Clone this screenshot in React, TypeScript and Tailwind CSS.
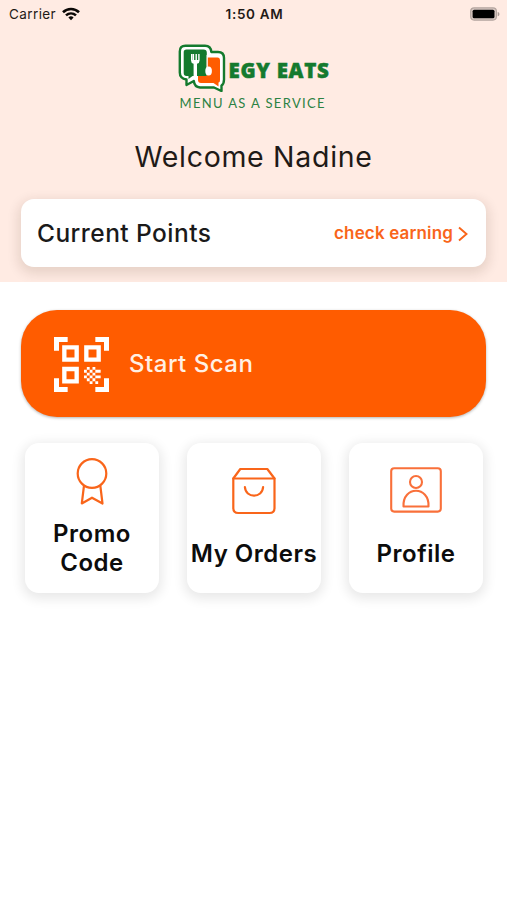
const font = "font-['Inter','Liberation_Sans',sans-serif]";

const StatusBar = () => {
    return (
        <div className="flex h-7 items-center justify-between pl-[9px] pr-[7px] text-[13.5px] text-[#1f1a17]">
            <div className="flex w-40 items-center gap-[6px]">
                <span className="tracking-[0.4px]">Carrier</span>
                <svg className="mb-px h-[14px] w-[18px]" viewBox="0 0 18 14" fill="none" stroke="#0b0806" strokeWidth="2.6">
                    <path d="M1 5.2C5.5 .9 12.5 .9 17 5.2" />
                    <path d="M4 8.4C6.9 5.8 11.1 5.8 14 8.4" />
                    <path d="M6.4 10.4C8 9 10 9 11.6 10.4L9 13.2Z" fill="#0b0806" stroke="none" />
                </svg>
            </div>
            <span className="font-semibold tracking-[0.7px]">1:50 AM</span>
            <div className="flex w-40 items-center justify-end">
                <svg className="mb-px h-[14px] w-[30px]" viewBox="0 0 31 14">
                    <rect x=".7" y=".7" width="26.6" height="12.6" rx="3.6" fill="#d9c9c3" stroke="#b3a49e" strokeWidth="1.2" />
                    <rect x="2.7" y="2.6" width="22.6" height="8.8" rx="1.6" fill="#000" />
                    <path d="M28.6 5V9.4C31 8.8 31 5.6 28.6 5Z" fill="#a99b95" />
                </svg>
            </div>
        </div>
    )
}

const Logo = () => {
    return (
        <div className="mx-auto flex w-[152px] flex-col">
            <div className="flex h-[48px] items-center">
                <svg className="h-[48px] w-[48px] shrink-0" viewBox="0 0 48 48">
                    <path
                        d="M7.500 1.800H27Q32.800 1.800 33.300 8H40Q46 8 46 14V35.500Q46 40 43.500 41.500V47L36 43.500H22Q16.500 43 15.800 37L8.500 41V35.500Q1.800 34.500 1.800 28.500V7.500Q1.800 1.800 7.500 1.800Z"
                        fill="#fff"
                        stroke="#147a2e"
                        strokeWidth="2.4"
                        strokeLinejoin="round"
                    />
                    <path d="M8.500 5.500H25.500Q28.800 5.500 28.800 8.800V32H14.500L10.500 35V32H8.500Q5.700 32 5.700 29V8.300Q5.700 5.500 8.500 5.500Z" fill="#147a2e" />
                    <path d="M28.800 13.500H39.500Q42 13.500 42 16.500V36Q42 38.500 40.500 38.500V42.500L35.500 39H23Q20 39 20 36V32H28.800Z" fill="#ff5c00" />
                    <path d="M13 10V16.500Q13 19.200 15.600 19.800V32H19V19.800Q21.600 19.200 21.600 16.500V10H20.200V16H18.900V10H17.500V16H16.100V10H14.600V16H14.300V10Z" fill="#fff" />
                    <ellipse cx="30.600" cy="27" rx="3.300" ry="4.600" fill="#fff" />
                    <path d="M28.600 11H29.800V25H28.600Z" fill="#fff" />
                </svg>
                <span className="ml-[3px] mt-[4px] whitespace-nowrap font-['Open_Sans',sans-serif] text-[20.5px] font-extrabold leading-none tracking-[0.7px] text-[#147a2e] [-webkit-text-stroke:0.5px_#147a2e]">
                    EGY EATS
                </span>
            </div>
            <span className="ml-[2px] mt-[4px] whitespace-nowrap font-['Lato',sans-serif] text-[13px] leading-[14px] tracking-[1.35px] text-[#2c8243]">
                MENU AS A SERVICE
            </span>
        </div>
    )
}

const QrIcon = () => {
    return (
        <svg className="mt-px h-[55px] w-[55px]" viewBox="0 0 165 165" fill="#fff">
            <path d="M0 0H41V15H15V41H0ZM124 0H165V41H150V15H124ZM0 124H15V150H41V165H0ZM150 124H165V165H124V150H150Z" />
            <path d="M31 31H68V68H31ZM97 31H134V68H97ZM31 96H68V133H31Z" fill="none" stroke="#fff" strokeWidth="13" />
            <path d="M98.500 90h8.500v8.500h-8.500zM115.500 90h8.500v8.500h-8.500zM90 98.500h8.500v8.500h-8.500zM107 98.500h8.500v8.500h-8.500zM124 98.500h16v8.500h-16zM98.500 107h8.500v8.500h-8.500zM115.500 107h8.500v8.500h-8.500zM107 115.500h8.500v8.500h-8.500zM124 115.500h16v8.500h-16zM90 115.500h8.500v8.500h-8.500zM98.500 124h8.500v8.500h-8.500zM115.500 124h8.500v8.500h-8.500zM107 132.500h8.500v8.500h-8.500zM124 132.500h8.500v8.500h-8.500z" />
        </svg>
    )
}

const RibbonIcon = () => {
    return (
        <svg className="h-[50px] w-[34px]" viewBox="0 0 34 50" fill="none" stroke="#f9651a" strokeWidth="2.2" strokeLinejoin="round">
            <circle cx="17" cy="16.5" r="14.3" />
            <path d="M9 28.500L6.800 46.500L17 40.700L27.500 46.500L25.300 28.500" />
        </svg>
    )
}

const BagIcon = () => {
    return (
        <svg className="h-[48px] w-[44px]" viewBox="0 0 44 48" fill="none" stroke="#f9651a" strokeWidth="2.2" strokeLinecap="round" strokeLinejoin="round">
            <path d="M1.300 11.500L8.300 2H35.300L42.500 11.500V41Q42.500 46 37.500 46H6.300Q1.300 46 1.300 41Z" />
            <path d="M1.300 11.500H42.500" />
            <path d="M12.900 20C13.500 31.500 30.500 31.500 31.100 20" />
        </svg>
    )
}

const ProfileIcon = () => {
    return (
        <svg className="h-[46px] w-[52px]" viewBox="0 0 52 46" fill="none" stroke="#f9703a" strokeWidth="2.1" strokeLinejoin="round">
            <rect x="1.200" y="1.200" width="49.600" height="43.400" rx="3" />
            <circle cx="26" cy="15" r="6" />
            <path d="M13.500 39.500C12.300 18.500 39.700 18.500 38.500 39.500Z" />
        </svg>
    )
}

const Card = ({ icon, label, gap }: { icon: React.ReactNode; label: string; gap: string }) => {
    return (
        <div className={`flex h-[150px] w-[134px] flex-col items-center justify-center rounded-[14px] bg-white pb-[2px] shadow-[0_3px_12px_3px_rgba(0,0,0,0.09)] ${gap}`}>
            {icon}
            <span className="text-center text-[24px] font-semibold leading-[29px] tracking-[0.5px] text-[#0c0c0c]">
                {label}
            </span>
        </div>
    )
}

const App = () => {
    return (
        <div className={`h-[900px] w-[507px] overflow-hidden bg-white ${font}`}>
            <div className="h-[282px] overflow-hidden bg-[#ffebe3]">
                <StatusBar />
                <div className="mt-[16px]">
                    <Logo />
                </div>
                <h1 className="mt-[29px] text-center text-[28.5px] leading-[36px] tracking-[0.7px] text-[#1f1a17]">
                    Welcome Nadine
                </h1>
                <div className="mx-[21px] mt-[24px] flex h-[68px] items-center justify-between rounded-[13px] bg-white pl-4 pr-[18px] shadow-[0_4px_12px_3px_rgba(60,30,10,0.12)]">
                    <span className="text-[24.5px] font-medium tracking-[0.45px] text-[#1a1a1a]">Current Points</span>
                    <div className="mt-px flex items-center gap-[5px] text-[#f9651a]">
                        <span className="text-[17px] font-semibold tracking-[0.15px]">check earning</span>
                        <svg className="h-[16px] w-[10px]" viewBox="0 0 10 16" fill="none" stroke="currentColor" strokeWidth="1.9">
                            <path d="M1 1.500L8.500 8L1 14.500" />
                        </svg>
                    </div>
                </div>
            </div>

            <div className="mx-[21px] mt-[28px] flex h-[107px] items-center rounded-[36px] bg-[#ff5c00] pl-[33px] shadow-[0_1px_3px_rgba(0,0,0,0.3)]">
                <QrIcon />
                <span className="ml-[20px] text-[24px] font-medium tracking-[0.5px] text-[#fff0e4]">Start Scan</span>
            </div>

            <div className="mt-[26px] flex gap-[28px] pl-[25px]">
                <Card icon={<RibbonIcon />} label="Promo Code" gap="gap-[12px]" />
                <Card icon={<BagIcon />} label="My Orders" gap="gap-[24px]" />
                <Card icon={<ProfileIcon />} label="Profile" gap="gap-[26px]" />
            </div>
        </div>
    )
}

export default App;
